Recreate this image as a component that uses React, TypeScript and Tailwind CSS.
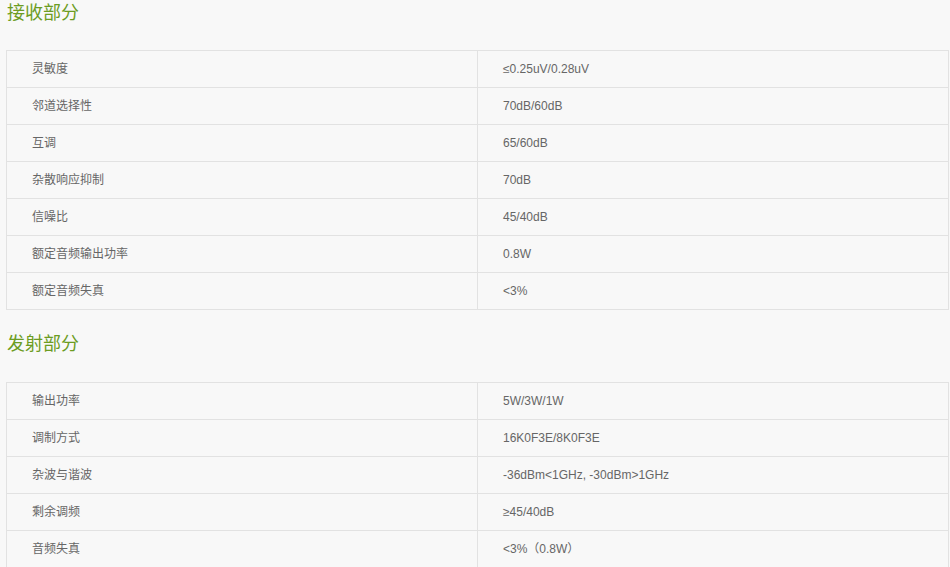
const receive = [
  ["灵敏度", "≤0.25uV/0.28uV"],
  ["邻道选择性", "70dB/60dB"],
  ["互调", "65/60dB"],
  ["杂散响应抑制", "70dB"],
  ["信噪比", "45/40dB"],
  ["额定音频输出功率", "0.8W"],
  ["额定音频失真", "<3%"],
];

const transmit = [
  ["输出功率", "5W/3W/1W"],
  ["调制方式", "16K0F3E/8K0F3E"],
  ["杂波与谐波", "-36dBm<1GHz, -30dBm>1GHz"],
  ["剩余调频", "≥45/40dB"],
  ["音频失真", "<3%（0.8W）"],
];

function SpecTable({ rows }: { rows: string[][] }) {
  return (
    <table className="w-[943px] ml-[6px] border-collapse table-fixed">
      <tbody>
        {rows.map(([k, v]) => (
          <tr key={k} className="h-[37px]">
            <td className="w-1/2 border border-[#e2e2e2] pl-[25px] text-[12px] text-[#666]">{k}</td>
            <td className="w-1/2 border border-[#e2e2e2] pl-[25px] text-[12px] text-[#666]">{v}</td>
          </tr>
        ))}
      </tbody>
    </table>
  );
}

export default function App() {
  return (
    <div
      className="min-h-screen w-[950px] bg-[#f8f8f8] overflow-hidden"
      style={{ fontFamily: '"Liberation Sans", "Noto Sans CJK SC", sans-serif' }}
    >
      <h3 className="pl-[7px] pt-px text-[18px] leading-[24px] text-[#6c9c22] mb-[25px]">接收部分</h3>
      <SpecTable rows={receive} />
      <h3 className="pl-[7px] mt-[22px] text-[18px] leading-[24px] text-[#6c9c22] mb-[26px]">发射部分</h3>
      <SpecTable rows={transmit} />
    </div>
  );
}
